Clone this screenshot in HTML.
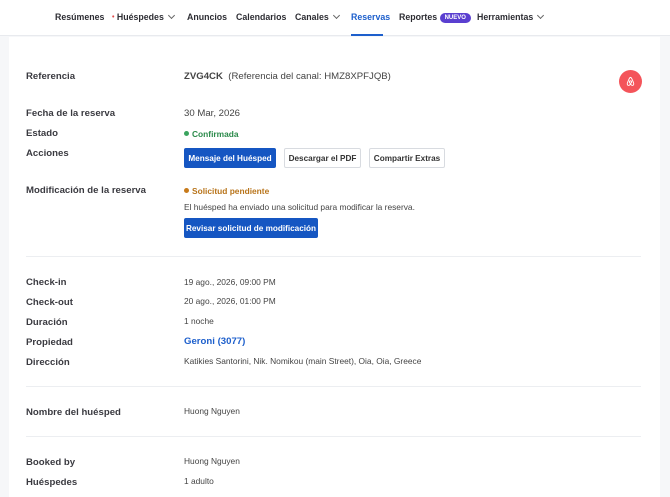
<!DOCTYPE html>
<html><head><meta charset="utf-8"><style>
*{margin:0;padding:0;box-sizing:border-box}
body{width:670px;height:490px;overflow:hidden;background:#f6f7f9;font-family:"Liberation Sans",Arial,sans-serif;position:relative;color:#333}
.nav{position:absolute;left:0;top:0;width:670px;height:36px;background:#fff;border-bottom:1px solid #e8eaee}
.n{position:absolute;top:12px;font-size:8.8px;font-weight:bold;color:#2d2d33;white-space:nowrap}
.chev{display:inline-block;width:5px;height:5px;border-right:1px solid #666;border-bottom:1px solid #666;transform:rotate(45deg);margin-left:5px;position:relative;top:-2px}
.card{position:absolute;left:9px;top:37px;width:651px;height:460px;background:#fff}
.a{position:absolute;white-space:nowrap}
.l{left:26px;font-size:9.6px;font-weight:bold;color:#3a3a40}
.v{left:184px;font-size:8.4px;color:#444}
.hr{position:absolute;left:26px;width:615px;height:1px;background:#eceef1}
.btn{position:absolute;height:20px;font-size:8.2px;font-weight:bold;display:flex;align-items:center;justify-content:center;border-radius:2px}
.pri{background:#1556c2;color:#fff}
.sec{background:#fff;border:1px solid #d8dbe0;color:#333}
.dot{display:inline-block;width:5px;height:5px;border-radius:50%;margin-right:3px;position:relative;top:-1px}
</style></head><body>
<div class="nav">
<div class="n" style="left:55px">Resúmenes</div>
<div class="n" style="left:112px"><span style="color:#e04848;font-size:7px;position:relative;top:-1px">•</span> Huéspedes<span class="chev"></span></div>
<div class="n" style="left:187px">Anuncios</div>
<div class="n" style="left:236px">Calendarios</div>
<div class="n" style="left:295px">Canales<span class="chev"></span></div>
<div class="n" style="left:351px;color:#1d5fcc">Reservas</div>
<div class="n" style="left:399px">Reportes <span style="display:inline-block;background:#5a3fd0;color:#fff;font-size:6px;padding:2px 5px;border-radius:6px;position:relative;top:-1px">NUEVO</span></div>
<div class="n" style="left:477px">Herramientas<span class="chev"></span></div>
<div style="position:absolute;left:351px;top:34px;width:32px;height:2px;background:#1d5fcc"></div>
</div>
<div class="card"></div>
<div class="a l" style="top:71px">Referencia</div>
<div class="a" style="left:184px;top:71px;font-size:9.6px;color:#444"><b>ZVG4CK</b>&nbsp;&nbsp;(Referencia del canal: HMZ8XPFJQB)</div>
<div class="a" style="left:619px;top:70px;width:23px;height:23px;border-radius:50%;background:#f4545a;display:flex;align-items:center;justify-content:center">
<svg width="11" height="11" viewBox="0 0 12 12" fill="none" stroke="#fff" stroke-width="1"><path d="M6 1.5C5 1.5 4.5 3 3 6.5 2 8.8 2.5 10.3 4 10.3 5 10.3 6 8.8 6 8.8S7 10.3 8 10.3c1.5 0 2-1.5 1-3.8C7.5 3 7 1.5 6 1.5z"/><circle cx="6" cy="6.6" r="1.3"/></svg></div>
<div class="a l" style="top:108px">Fecha de la reserva</div>
<div class="a v" style="top:108px;font-size:9.6px">30 Mar, 2026</div>
<div class="a l" style="top:128px">Estado</div>
<div class="a v" style="top:129px;font-weight:bold;color:#2a8a4a"><span class="dot" style="background:#3aa45e"></span>Confirmada</div>
<div class="a l" style="top:148px">Acciones</div>
<div class="btn pri" style="left:184px;top:148px;width:92px">Mensaje del Huésped</div>
<div class="btn sec" style="left:284px;top:148px;width:77px">Descargar el PDF</div>
<div class="btn sec" style="left:369px;top:148px;width:76px">Compartir Extras</div>
<div class="a l" style="top:185px">Modificación de la reserva</div>
<div class="a v" style="top:186px;font-weight:bold;color:#b8741a"><span class="dot" style="background:#c77a1a"></span>Solicitud pendiente</div>
<div class="a v" style="top:202px">El huésped ha enviado una solicitud para modificar la reserva.</div>
<div class="btn pri" style="left:184px;top:218px;width:134px">Revisar solicitud de modificación</div>
<div class="hr" style="top:256px"></div>
<div class="a l" style="top:277px">Check-in</div><div class="a v" style="top:277px">19 ago., 2026, 09:00 PM</div>
<div class="a l" style="top:297px">Check-out</div><div class="a v" style="top:296px">20 ago., 2026, 01:00 PM</div>
<div class="a l" style="top:317px">Duración</div><div class="a v" style="top:316px">1 noche</div>
<div class="a l" style="top:337px">Propiedad</div><div class="a v" style="top:336px;font-size:9.6px;font-weight:bold;color:#1d5fcc">Geroni (3077)</div>
<div class="a l" style="top:357px">Dirección</div><div class="a v" style="top:356px">Katikies Santorini, Nik. Nomikou (main Street), Oia, Oia, Greece</div>
<div class="hr" style="top:386px"></div>
<div class="a l" style="top:407px">Nombre del huésped</div><div class="a v" style="top:406px">Huong Nguyen</div>
<div class="hr" style="top:436px"></div>
<div class="a l" style="top:457px">Booked by</div><div class="a v" style="top:456px">Huong Nguyen</div>
<div class="a l" style="top:477px">Huéspedes</div><div class="a v" style="top:476px">1 adulto</div>
</body></html>
